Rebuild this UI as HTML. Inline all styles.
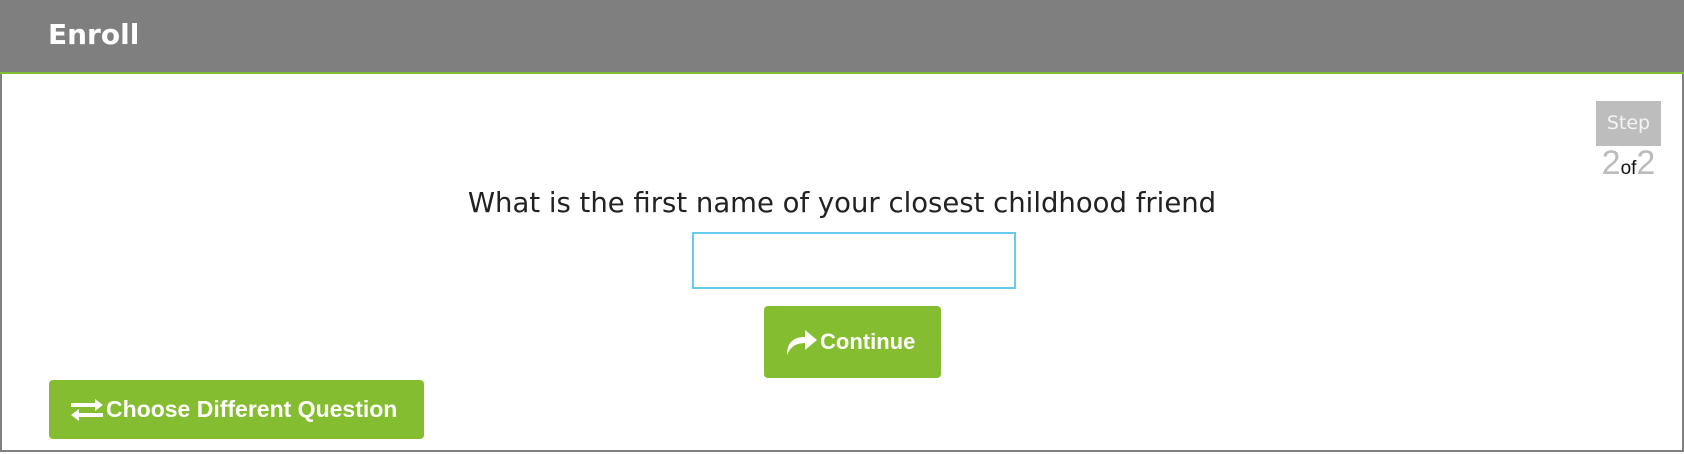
<!DOCTYPE html>
<html><head><style>
html,body{margin:0;padding:0;width:1684px;height:454px;overflow:hidden;background:#fff;font-family:"Liberation Sans",sans-serif;}
.frame{position:absolute;left:0;top:0;width:1680px;height:450px;border:2px solid #808080;border-top:none;}
.hdr{position:absolute;left:0;top:0;width:1684px;height:72px;background:#7f7f7f;border-bottom:2px solid #84bd2f;}
.hdr span{position:absolute;left:48px;top:18px;color:#fff;font-weight:bold;font-size:28px;font-family:"DejaVu Sans",sans-serif;}
.step{position:absolute;left:1596px;top:101px;width:65px;height:45px;background:#bdbdbd;color:#f4f4f4;font-size:19px;text-align:center;line-height:45px;font-family:"DejaVu Sans",sans-serif;}
.of{position:absolute;left:1596px;top:146px;width:65px;text-align:center;color:#bbb;font-size:34px;line-height:34px;}
.of i{font-style:normal;color:#111;font-size:19px;}
.q{position:absolute;left:0;width:1684px;top:187px;text-align:center;font-size:27.5px;color:#222;font-family:"DejaVu Sans",sans-serif;}
.inp{position:absolute;left:692px;top:232px;width:320px;height:53px;border:2px solid #66ccee;}
.btn{position:absolute;background:#84bd2f;border-radius:4px;color:#fff;font-weight:bold;font-size:22px;display:flex;align-items:center;justify-content:flex-start;}
</style></head><body>
<div class="frame"></div>
<div class="hdr"><span>Enroll</span></div>
<div class="step">Step</div>
<div class="of">2<i>of</i>2</div>
<div class="q">What is the first name of your closest childhood friend</div>
<div class="inp"></div>
<div class="btn" style="left:764px;top:306px;width:177px;height:72px;padding-left:20px;box-sizing:border-box;">
<svg width="36" height="30" viewBox="0 0 36 30"><path d="M3 28 C3 15 10 10 21 10 L21 3 L33 13 L21 23 L21 16 C12 16 6 20 3 28Z" fill="#fff"/></svg>Continue</div>
<div class="btn" style="left:49px;top:380px;width:375px;height:59px;padding-left:19px;box-sizing:border-box;font-size:23px;">
<svg width="38" height="26" viewBox="0 0 38 26"><path d="M3 6h24V2l8 6-8 6v-4H3z M35 16H11v-4l-8 6 8 6v-4h24z" fill="#fff"/></svg>Choose Different Question</div>
</body></html>
